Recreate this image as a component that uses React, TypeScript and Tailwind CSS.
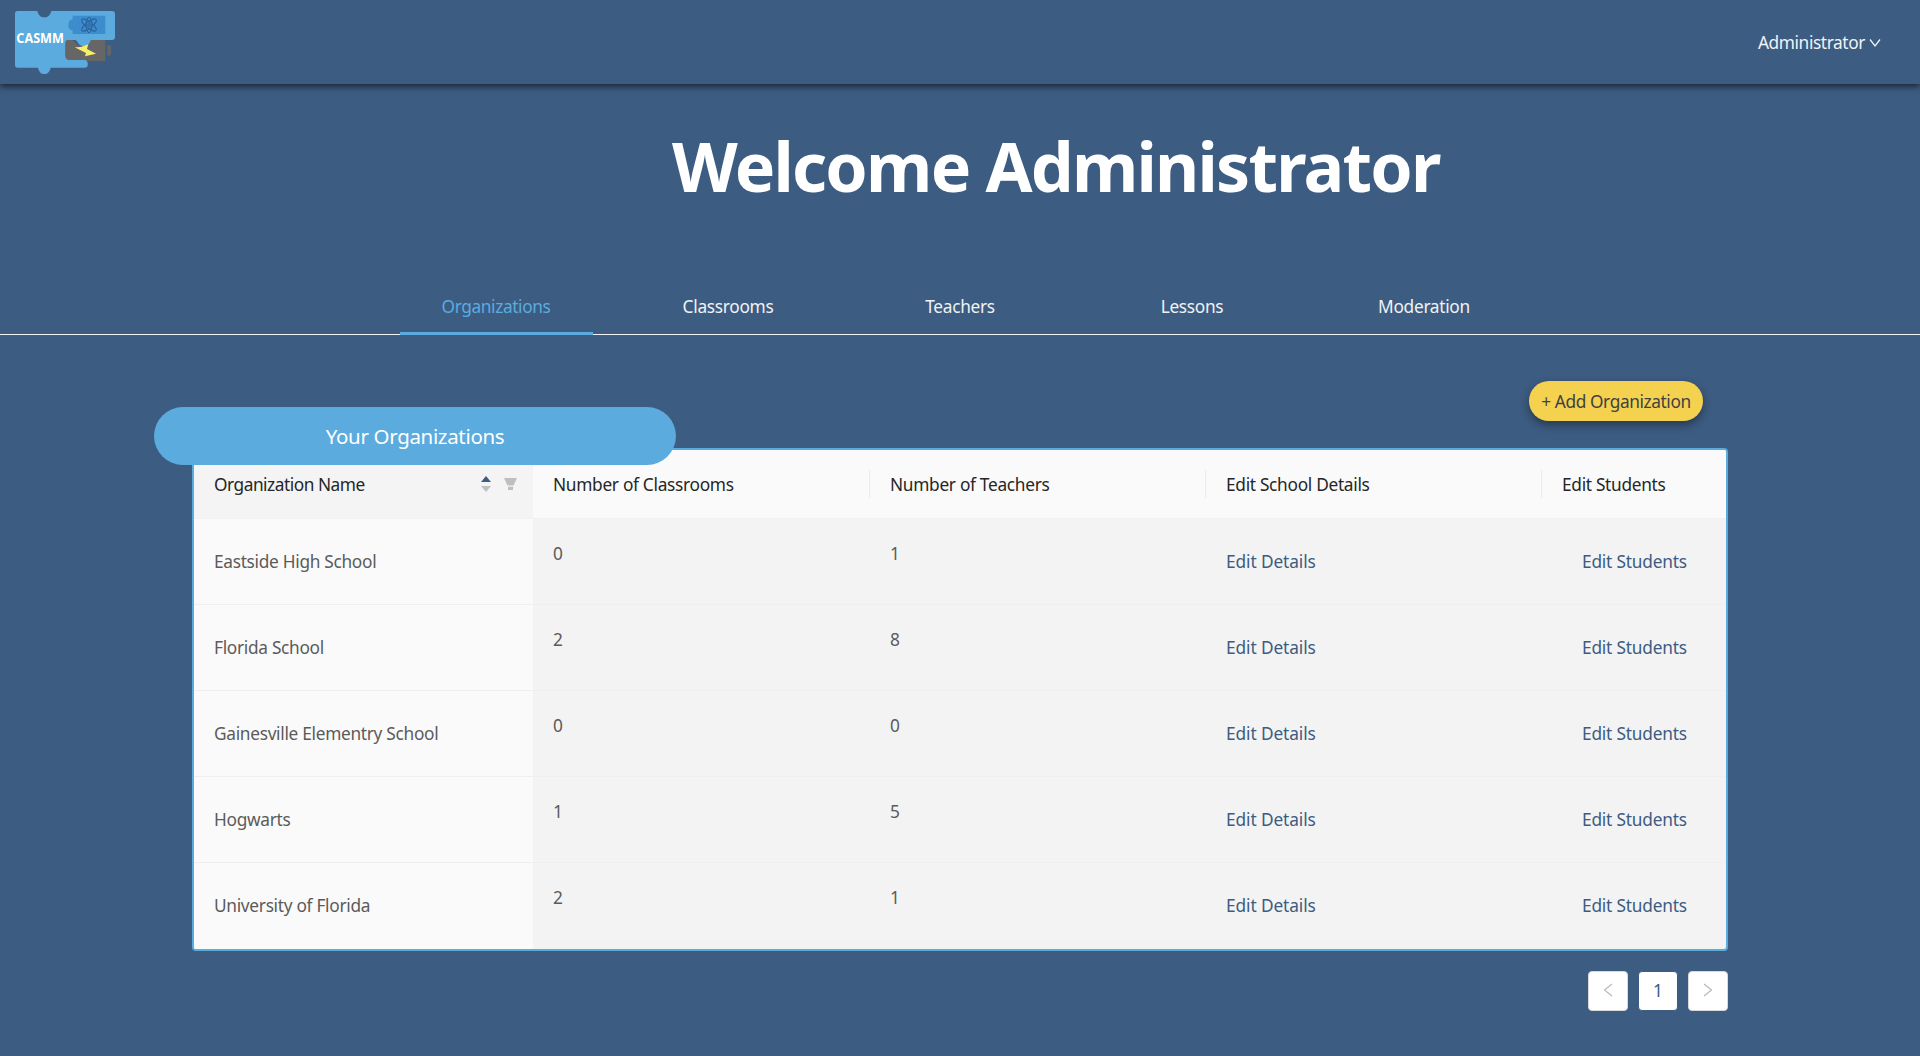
const schools = [
  { name: "Eastside High School", classrooms: 0, teachers: 1 },
  { name: "Florida School", classrooms: 2, teachers: 8 },
  { name: "Gainesville Elementry School", classrooms: 0, teachers: 0 },
  { name: "Hogwarts", classrooms: 1, teachers: 5 },
  { name: "University of Florida", classrooms: 2, teachers: 1 },
];

const tabs = ["Organizations", "Classrooms", "Teachers", "Lessons", "Moderation"];

const columns = "grid grid-cols-[339px_337px_336px_336px_184px]";

function Logo() {
  return (
    <svg width="115" height="76" viewBox="0 0 345 228">
      <path
        fill="#5babde"
        d="M29 21H88C91 33 98 40 109 40C120 40 127 33 130 21H312Q321 21 321 30V99Q321 108 312 108H252C248 121 240 127 229 127C218 127 211 121 207 112Q205 108 199 108H181Q173 108 173 116V156Q173 167 184 167H232Q239 170 239 177V184Q239 191 230 191H128C125 203 119 210 109 210C99 210 93 203 90 191H29Q21 191 21 183V29Q21 21 29 21Z"
      />
      <path
        fill="#666666"
        d="M181 108H190C198 109 201 113 205 119C210 124 217 126 224 126C237 126 245 120 248 108H292V171H238Q235 167 229 167H184Q172 167 172 156V117Q172 108 181 108Z"
      />
      <path fill="#666666" d="M298 123H304Q309 124 309 129V149Q309 155 304 155H298Z" />
      <path fill="#3d8dcd" d="M194 35H292V90H194V79C184 78 181 72 181 62C181 52 186 47 194 46Z" />
      <g fill="none" stroke="#2a629c" strokeWidth="3">
        <ellipse cx="243" cy="63" rx="27" ry="9" transform="rotate(38 243 63)" />
        <ellipse cx="243" cy="63" rx="27" ry="9" transform="rotate(-38 243 63)" />
        <ellipse cx="243" cy="63" rx="9" ry="23" />
        <circle cx="243" cy="63" r="4" />
      </g>
      <path fill="#f5f06a" d="M200 130Q222 131 241 121L237 135L264 149L231 157L234 147Z" />
      <text
        x="25"
        y="116"
        fill="#ffffff"
        fontFamily="'Open Sans', 'Noto Sans', sans-serif"
        fontWeight="700"
        fontSize="41"
        textLength="143"
        lengthAdjust="spacingAndGlyphs"
      >
        CASMM
      </text>
    </svg>
  );
}

function Caret({ d }: { d: string }) {
  return (
    <svg className="h-[14px] w-[10px]" viewBox="0 0 10 14" fill="none" stroke="currentColor" strokeWidth="1.2">
      <path d={d} />
    </svg>
  );
}

function HeaderCell({ label, last }: { label: string; last?: boolean }) {
  return (
    <div className="flex items-center justify-between bg-[#fafafa] pl-5">
      <span className="pt-0.5 tracking-[-0.3px]">{label}</span>
      {!last && <span className="h-7 w-px bg-[#ebebeb]" />}
    </div>
  );
}

export default function App() {
  return (
    <div className="flex h-[1056px] w-[1920px] flex-col overflow-hidden bg-[#3d5c82] font-['Noto_Sans',sans-serif] text-[17.3px] leading-7 text-[#5b5b5b]">
      <header className="flex h-[84px] shrink-0 items-start justify-between pr-[39px] pl-2 shadow-[0_3px_6px_rgba(0,0,0,0.55)]">
        <div className="pt-1">
          <Logo />
        </div>
        <div className="flex items-center gap-1 pt-[29px] text-[#f0f2f5]">
          <span className="tracking-[-0.4px]">Administrator</span>
          <svg className="size-3" viewBox="0 0 12 12" fill="none" stroke="currentColor" strokeWidth="1.3">
            <path d="M1 2.5L6 9L11 2.5" />
          </svg>
        </div>
      </header>

      <h1 className="mt-10 ml-[672px] text-[68px] leading-[84px] font-bold tracking-[-1.75px] whitespace-nowrap text-white">
        Welcome Administrator
      </h1>

      <nav className="mt-[72px] flex h-[55px] shrink-0 justify-center gap-[39px] border-b border-[#f4f4f4] text-[#f0f2f5]">
        {tabs.map((tab, i) => (
          <div
            key={tab}
            className={
              i === 0
                ? "h-[55px] w-[193px] border-b-[3px] border-[#5babde] pt-[13px] text-center tracking-[-0.38px] text-[#5babde]"
                : "h-[54px] w-[193px] pt-[13px] text-center tracking-[-0.3px]"
            }
          >
            {tab}
          </div>
        ))}
      </nav>

      <main className="flex flex-col px-[192px]">
        <div className="mt-[46px] mr-[25px] flex h-10 w-[174px] items-center justify-center self-end rounded-full bg-[#f4d250] pt-px tracking-[-0.4px] whitespace-nowrap text-[#414141] shadow-[0_4px_10px_rgba(0,0,0,0.4)]">
          + Add Organization
        </div>

        <div className="relative z-10 -mt-[14px] -ml-[38px] flex h-[58px] w-[522px] items-center justify-center rounded-[29px] bg-[#5babde] text-[20.5px] tracking-[-0.33px] text-white">
          Your Organizations
        </div>

        <section className="-mt-[17px] h-[503px] overflow-hidden rounded border-2 border-[#5babde] bg-[#f3f3f3]">
          <div className={`${columns} h-[69px] border-b border-[#f0f0f0] text-[#262626]`}>
            <div className="flex items-center bg-[#f4f4f4] pr-4 pl-5">
              <span className="grow pt-0.5 tracking-[-0.47px]">Organization Name</span>
              <svg className="mr-[13px] h-4 w-[10px]" viewBox="0 0 10 16">
                <path d="M5 0L10 6H0Z" fill="#3d5c82" />
                <path d="M5 16L0 10H10Z" fill="#bfbfbf" />
              </svg>
              <svg className="h-3 w-[13px]" viewBox="0 0 13 12" fill="#bfbfbf">
                <path d="M0 0H13L9.5 7.5H3.5ZM4 8.7H9V12H4Z" />
              </svg>
            </div>
            <HeaderCell label="Number of Classrooms" />
            <HeaderCell label="Number of Teachers" />
            <HeaderCell label="Edit School Details" />
            <HeaderCell label="Edit Students" last />
          </div>
          {schools.map((school) => (
            <div key={school.name} className={`${columns} h-[86px] border-b border-[#efefef] last:border-b-0`}>
              <div className="flex items-center bg-[#fafafa] pl-5 tracking-[-0.3px]">{school.name}</div>
              <div className="pt-[21px] pl-5">{school.classrooms}</div>
              <div className="pt-[21px] pl-5">{school.teachers}</div>
              <div className="flex items-center pl-5 tracking-[-0.1px] text-[#3d5c82]">Edit Details</div>
              <div className="flex items-center pl-10 tracking-[-0.2px] text-[#3d5c82]">Edit Students</div>
            </div>
          ))}
        </section>

        <div className="mt-5 flex justify-end gap-[10px]">
          <div className="grid size-10 place-items-center rounded border border-[#d9d9d9] bg-white pb-0.5 text-[#b8b8b8]">
            <Caret d="M9 1L1.5 7L9 13" />
          </div>
          <div className="grid size-10 place-items-center rounded border border-[#3d5c82] bg-white text-[#3d5c82]">
            1
          </div>
          <div className="grid size-10 place-items-center rounded border border-[#d9d9d9] bg-white pb-0.5 text-[#b8b8b8]">
            <Caret d="M1 1L8.5 7L1 13" />
          </div>
        </div>
      </main>
    </div>
  );
}
